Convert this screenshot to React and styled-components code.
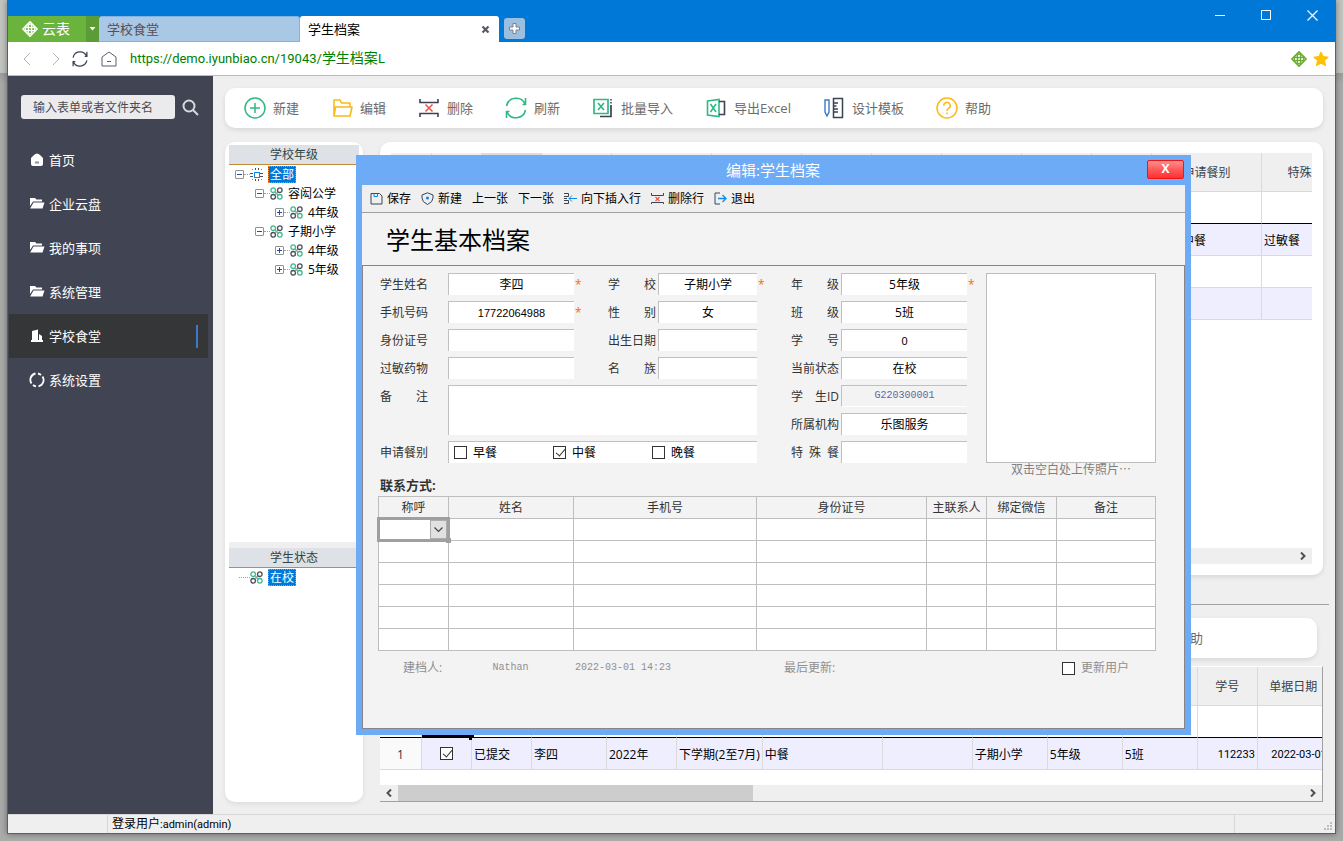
import React, { useState } from 'react';
import styled, { createGlobalStyle } from 'styled-components';

const GlobalStyle = createGlobalStyle`
  * {
    box-sizing: border-box;
  }

  body {
    margin: 0;
    font-family: "Open Sans", "Noto Sans CJK SC", sans-serif;
    font-size: 12px;
    line-height: 16px;
    color: #000;
  }

  button, input, select, textarea {
    margin: 0;
    padding: 0;
    border: 0;
    border-radius: 0;
    background: none;
    font: inherit;
    color: inherit;
  }

  svg {
    display: block;
    flex: none;
  }
`;

/* ---------- window frame ---------- */

const Desktop = styled.div`
  display: flex;
  flex-direction: column;
  min-height: 100vh;
  padding: 0 7px 7px;
  background: linear-gradient(#c2c4c0 73px, #9b9c9b 73px, #a9aba9 84px);
`;

const Window = styled.div`
  position: relative;
  display: flex;
  flex: 1;
  flex-direction: column;
  border: 1px solid #0078d7;
  border-top: 0;
  background: #efefef;
  box-shadow: 0 0 6px rgba(0, 0, 0, 0.4);
`;

const TitleBar = styled.header`
  display: flex;
  align-items: flex-end;
  height: 42px;
  background: #0078d7;
`;

const BrandButton = styled.button`
  display: flex;
  align-items: center;
  gap: 4px;
  width: 78px;
  height: 26px;
  padding-left: 14px;
  background: #6ab43e;
  color: #fff;
  font-size: 14px;
`;

const BrandMore = styled.button`
  display: flex;
  align-items: center;
  justify-content: center;
  width: 13px;
  height: 26px;
  background: #5c9c37;
`;

const Tab = styled.div`
  display: flex;
  align-items: center;
  width: ${(props) => (props.$active ? '199px' : '201px')};
  height: 26px;
  padding: 0 8px;
  border: solid ${(props) => (props.$active ? '#fff' : '#84b2e0')};
  border-width: 1px 1px 1px 0;
  border-radius: 3px 3px 0 0;
  background: ${(props) => (props.$active ? '#fff' : '#a9c8e5')};
  color: ${(props) => (props.$active ? '#000' : '#5d4c50')};

  .name {
    flex: 1;
    text-align: left;
    font-size: 13px;
  }
`;

const AddTab = styled.button`
  display: flex;
  align-items: center;
  justify-content: center;
  width: 21px;
  height: 21px;
  margin: 0 0 3px 5px;
  border-radius: 3px;
  background: #9dbfdf;
`;

const WindowButtons = styled.div`
  display: flex;
  align-self: flex-start;
  margin-left: auto;

  button {
    display: flex;
    align-items: center;
    justify-content: center;
    width: 46px;
    height: 30px;
  }
`;

const AddressBar = styled.nav`
  display: flex;
  align-items: center;
  gap: 13px;
  height: 34px;
  padding: 0 6px 0 12px;
  border-bottom: 1px solid #bcbcbc;
  background: #fff;

  a {
    color: #008000;
    font-family: Roboto, "Noto Sans CJK SC", sans-serif;
    font-size: 13px;
    text-decoration: none;
  }

  a span {
    font-size: 14px;
  }

  .marks {
    display: flex;
    gap: 6px;
    margin-left: auto;
  }
`;

const StatusBar = styled.footer`
  display: flex;
  height: 19px;
  border-top: 1px solid #d7d7d7;
  line-height: 18px;

  .blank {
    width: 100px;
    border-right: 1px solid #d7d7d7;
  }

  .user {
    flex: 1;
    padding-left: 4px;
  }

  .user span {
    font-family: Roboto, sans-serif;
    font-size: 11px;
  }

  .grip {
    display: flex;
    align-items: flex-end;
    justify-content: flex-end;
    width: 101px;
    padding: 3px;
    border-left: 1px solid #d7d7d7;
  }
`;

/* ---------- side menu ---------- */

const Body = styled.div`
  display: flex;
  flex: 1;
`;

const SideBar = styled.aside`
  flex: none;
  width: 205px;
  padding: 19px 0;
  background: #414453;
`;

const SearchRow = styled.form`
  display: flex;
  align-items: center;
  gap: 7px;
  margin-bottom: 19px;
  padding-left: 13px;

  input {
    width: 154px;
    height: 24px;
    padding: 0 12px;
    border-radius: 3px;
    background: #ebebee;
  }

  input::placeholder {
    color: #4c4c50;
  }
`;

const MenuItem = styled.a`
  display: flex;
  align-items: center;
  gap: 4px;
  height: 44px;
  margin: 0 5px 0 1px;
  padding: 0 10px 0 20px;
  background: ${(props) => (props.$active ? '#353638' : 'transparent')};
  color: #fff;
  font-size: 13px;
  text-decoration: none;

  &::after {
    content: "";
    width: 2px;
    height: 23px;
    margin-left: auto;
    background: ${(props) => (props.$active ? '#3f78c8' : 'transparent')};
  }
`;

/* ---------- main area ---------- */

const Content = styled.main`
  display: flex;
  flex: 1;
  flex-direction: column;
  gap: 14px;
  min-width: 0;
  padding: 12px;
`;

const ToolBar = styled.div`
  display: flex;
  align-items: center;
  gap: 32px;
  height: 40px;
  padding: 0 19px;
  border-radius: 10px;
  background: #fff;
  box-shadow: 0 2px 5px rgba(0, 0, 0, 0.1);
`;

const ToolButton = styled.button`
  display: flex;
  align-items: center;
  gap: 7px;
  color: #6b6b6b;
  font-size: 13px;
  white-space: nowrap;
`;

const Columns = styled.div`
  display: flex;
  flex: 1;
  gap: 17px;
`;

const TreePanel = styled.section`
  display: flex;
  flex-direction: column;
  flex: none;
  width: 138px;
  padding: 3px 4px;
  border-radius: 10px;
  background: #fff;
  box-shadow: 0 2px 5px rgba(0, 0, 0, 0.08);

  h2 {
    height: 20px;
    margin: 0;
    border-bottom: 1px solid #c08c3c;
    background: #dee2e6;
    color: #2f4545;
    font-size: 12px;
    font-weight: 400;
    line-height: 20px;
    text-align: center;
  }
`;

const Splitter = styled.div`
  height: 6px;
  background: #efefef;
`;

const Tree = styled.ul`
  flex: ${(props) => (props.$grow ? '1' : 'none')};
  height: ${(props) => (props.$grow ? 'auto' : '231px')};
  margin: 0;
  padding: 0;
  list-style: none;
`;

const TreeRow = styled.li`
  display: flex;
  align-items: center;
  height: 19px;
  padding-left: ${(props) => 6 + props.$level * 20}px;

  .toggle {
    display: flex;
    align-items: center;
    justify-content: center;
    width: 9px;
    height: 9px;
    border: 1px solid #919191;
    border-radius: 1px;
  }

  .dots {
    width: ${(props) => (props.$leaf ? '11px' : '6px')};
    margin-left: ${(props) => (props.$leaf ? '4px' : '0')};
    border-top: 1px dotted #a0a0a0;
  }

  .label {
    margin-left: 5px;
    white-space: nowrap;
  }

  .label.selected {
    padding: 0 1px;
    border: 1px dotted #ff8728;
    background: #0078d7;
    color: #fff;
    line-height: 15px;
  }
`;

const GridColumn = styled.div`
  display: flex;
  flex: 1;
  flex-direction: column;
  min-width: 0;
`;

const GridCard = styled.section`
  display: flex;
  flex: 1;
  flex-direction: column;
  padding: 11px;
  border-radius: 10px;
  background: #fff;
  box-shadow: 0 2px 5px rgba(0, 0, 0, 0.1);
`;

const Divider = styled.hr`
  width: auto;
  height: 1px;
  margin: 29px -6px 13px 0;
  border: 0;
  background: #a0a0a0;
`;

const LowerBar = styled(ToolBar)`
  flex: none;
  justify-content: flex-end;
  margin: 0 6px 8px 0;
  padding-right: 114px;
`;

const LowerGrid = styled.section`
  display: flex;
  flex-direction: column;
  height: 136px;
  border: 1px solid #a0a0a0;
  border-top-color: #fff;
  border-left: 0;
  background: #fff;
`;

const GridView = styled.div`
  flex: 1;
  overflow: hidden;
`;

const DataGrid = styled.table`
  width: max-content;
  table-layout: fixed;
  border-spacing: 0;

  th {
    height: 39px;
    padding: 2px 0 0;
    border-right: 1px solid #dadada;
    border-bottom: 1px solid #dadada;
    background: #efefef;
    color: #39424e;
    font-weight: 400;
  }

  th.sorted {
    background: #dcdcdc;
  }

  td {
    position: relative;
    height: 32px;
    padding: 2px 2px 0;
    border-right: 1px solid #dadada;
    border-bottom: 1px solid #dadada;
    white-space: nowrap;
  }

  tr.filter td {
    border-bottom-color: #000;
  }

  tr.shaded td {
    background: #eeeeff;
  }

  tr td.number {
    background: #fafafa;
    color: #333;
    text-align: center;
  }

  td.check {
    padding-top: 0;
    text-align: center;
  }

  .check input {
    display: block;
    margin: 0 auto;
  }

  .right {
    font-family: Roboto, sans-serif;
    font-size: 11px;
    text-align: right;
  }

  td.meal {
    padding-left: 30px;
  }
`;

const CellCursor = styled.span`
  position: absolute;
  top: -3px;
  left: 0;
  right: 0;
  height: 3px;
  background: #000;

  &::after {
    content: "";
    position: absolute;
    right: -3px;
    width: 5px;
    height: 5px;
    background: #000;
  }
`;

const ScrollBar = styled.div`
  display: flex;
  justify-content: space-between;
  height: 16px;
  background: #efefef;

  button {
    display: flex;
    align-items: center;
    justify-content: center;
    width: 18px;
  }

  .thumb {
    flex: none;
    width: 355px;
    margin-right: auto;
    background: #cdcdcd;
  }
`;

const CheckBox = styled.input.attrs({ type: 'checkbox' })`
  position: relative;
  flex: none;
  width: 13px;
  height: 13px;
  appearance: none;
  border: 1px solid #333;
  background: #fff;

  &:checked::after {
    content: "";
    position: absolute;
    top: 0;
    left: 4px;
    width: 4px;
    height: 8px;
    border: solid #333;
    border-width: 0 1px 1px 0;
    transform: rotate(40deg);
  }
`;

/* ---------- dialog ---------- */

const Dialog = styled.div`
  position: absolute;
  top: 155px;
  left: 348px;
  display: flex;
  flex-direction: column;
  width: 835px;
  min-height: 580px;
  padding: 0 6px 6px;
  background: #6dabf6;
`;

const DialogTitle = styled.div`
  display: flex;
  align-items: center;
  height: 30px;
  padding: 0 1px 0 37px;
  color: #fff;
  font-size: 15px;
  text-align: center;

  span {
    flex: 1;
  }

  button {
    width: 37px;
    height: 19px;
    margin-bottom: 2px;
    border: 1px solid #f01414;
    border-radius: 2px;
    background: linear-gradient(#ff8f8f, #ff5a5a 50%, #ff3030);
    font-size: 12px;
    font-weight: 700;
    line-height: 16px;
  }
`;

const DialogTools = styled.div`
  display: flex;
  align-items: center;
  gap: 10px;
  height: 28px;
  padding-left: 8px;
  border-bottom: 1px solid #a0a0a0;
  background: #efefef;

  button {
    display: flex;
    align-items: center;
    gap: 4px;
  }
`;

const FormTitle = styled.h1`
  height: 52px;
  margin: 0;
  padding-left: 24px;
  background: #f3f3f3;
  font-size: 24px;
  font-weight: 400;
  line-height: 54px;
`;

const FormBody = styled.form`
  flex: 1;
  padding: 7px 28px 0 15px;
  border: 1px solid #868686;
  background: #f3f3f3;
`;

const FieldGrid = styled.div`
  display: grid;
  grid-template-columns: 228px 183px 195px 170px;
  grid-template-rows: repeat(7, 22px);
  row-gap: 6px;
  padding-left: 2px;
`;

const Field = styled.div`
  grid-column: ${(props) => props.$col};
  grid-row: ${(props) => props.$row};
  display: flex;
  color: #333;
  line-height: 22px;

  > label, > .caption {
    flex: none;
    width: ${(props) => (props.$wide ? '68px' : '50px')};
    padding-top: 1px;
    white-space: pre;
  }

  > input {
    width: ${(props) => (props.$short ? '99px' : '126px')};
    border: solid #c0c0c0;
    border-width: 1px 0 0 1px;
    background: #fff;
    color: #000;
    text-align: center;
  }

  > input.digits {
    font-family: "Liberation Sans", "Noto Sans CJK SC", sans-serif;
    font-size: 11px;
  }

  > input:disabled {
    background: #f3f3f3;
    border-bottom: 1px solid #fff;
    color: #666699;
    font-family: "Liberation Mono", monospace;
    font-size: 10px;
  }

  > textarea {
    width: 309px;
    height: 50px;
    border: solid #c0c0c0;
    border-width: 1px 0 0 1px;
    background: #fff;
    resize: none;
  }

  .star {
    padding-left: 1px;
    color: #ff6a00;
    font-size: 12px;
    line-height: 24px;
  }
`;

const MealBox = styled.div`
  display: flex;
  width: 309px;
  padding-left: 5px;
  border: solid #c0c0c0;
  border-width: 1px 0 0 1px;
  background: #fff;

  label {
    display: flex;
    align-items: center;
    gap: 6px;
    width: 99px;
    color: #000;
  }
`;

const PhotoBox = styled.button`
  grid-column: 4;
  grid-row: 1 / 8;
  border: 1px solid #bebebe;
  background: #fff;
`;

const ContactHead = styled.div`
  display: flex;
  justify-content: space-between;
  height: 33px;
  padding-left: 2px;

  h3 {
    margin: 14px 0 0;
    color: #333;
    font-size: 13px;
    font-weight: 700;
  }

  p {
    width: 170px;
    margin: -1px 0 0;
    color: #808080;
    text-align: center;
  }
`;

const ContactTable = styled.table`
  width: 778px;
  table-layout: fixed;
  border-collapse: collapse;
  background: #fff;

  th, td {
    height: 22px;
    padding: 0;
    border: 1px solid #bebebe;
  }

  th {
    background: #f3f3f3;
    color: #333;
    font-weight: 400;
  }

  td:first-child {
    position: relative;
  }
`;

const CellSelect = styled.div`
  position: absolute;
  top: -2px;
  left: -2px;
  right: -2px;
  bottom: -2px;
  border: 3px solid #9e9ea3;

  select {
    width: 100%;
    height: 100%;
    appearance: none;
    background: #fff;
  }

  svg {
    position: absolute;
    top: 0;
    right: 0;
    pointer-events: none;
  }

  &::after {
    content: "";
    position: absolute;
    right: -4px;
    bottom: -4px;
    width: 5px;
    height: 5px;
    background: #9e9ea3;
  }
`;

const FormFoot = styled.div`
  display: grid;
  grid-template-columns: 70px 125px 209px 280px auto;
  align-items: center;
  height: 34px;
  color: #909090;

  .maker {
    padding-left: 25px;
  }

  .mono {
    font-family: "Liberation Mono", monospace;
    font-size: 10px;
  }

  .name {
    text-align: center;
  }

  .updated {
    padding-left: 2px;
  }

  label {
    display: flex;
    align-items: center;
    gap: 6px;
  }
`;

/* ---------- icons ---------- */

const BrandIcon = ({ size = 16, color = '#fff' }) => (
  <svg width={size} height={size} viewBox="0 0 18 18" fill="none" stroke={color}>
    <path d="M9 1 L17 9 L9 17 L1 9 Z" strokeWidth="1.8" strokeLinejoin="round" />
    <circle cx="9" cy="5.5" r="2" strokeWidth="1.5" />
    <circle cx="9" cy="12.5" r="2" strokeWidth="1.5" />
    <circle cx="5.5" cy="9" r="2" strokeWidth="1.5" />
    <circle cx="12.5" cy="9" r="2" strokeWidth="1.5" />
  </svg>
);

const RefreshIcon = ({ size = 22, color = '#2fb985', width = 1.6 }) => (
  <svg width={size} height={size} viewBox="0 0 22 22" fill="none" stroke={color} strokeWidth={width}>
    <path d="M1.500 9 A9.800 9.800 0 0 1 20 7 M20.500 1 V7.500 H17.500" />
    <path d="M20.500 13 A9.800 9.800 0 0 1 2 15 M1.500 21 V14.500 H4.500" />
  </svg>
);

const PlusIcon = () => (
  <svg width="22" height="22" fill="none" stroke="#2fb985" strokeWidth="1.5">
    <circle cx="11" cy="11" r="10" />
    <path d="M11 6 V16 M6 11 H16" />
  </svg>
);

const FolderIcon = () => (
  <svg width="22" height="22" fill="none" stroke="#fbb917" strokeWidth="1.6" strokeLinejoin="round">
    <path d="M3 19 V3 H9 L10.500 6 H19 V10 M3 19 L4.500 10 H21 L19 19 Z" />
  </svg>
);

const DeleteIcon = ({ size = 22, color = '#3b4252' }) => (
  <svg width={size} height={size} viewBox="0 0 22 22" fill="none">
    <path d="M2 2 V5.500 H20 V2 M2 20 V16.500 H20 V20" stroke={color} strokeWidth="1.6" />
    <path d="M7.500 7.500 L14.500 14.500 M14.500 7.500 L7.500 14.500" stroke="#f05545" strokeWidth="1.6" />
  </svg>
);

const SmallDeleteIcon = () => (
  <svg width="13" height="13" fill="none">
    <path d="M0.500 1 V3.500 H12.500 V1 M0.500 12 V10.500 H12.500 V12" stroke="#3b4252" />
    <path d="M4.500 5 L8.500 9 M8.500 5 L4.500 9" stroke="#f05545" strokeWidth="1.2" />
  </svg>
);

const ImportIcon = () => (
  <svg width="22" height="22" fill="none">
    <path d="M2 2.500 H16 V16.500 H2 Z M6 6 L12 13 M12 6 L6 13" stroke="#2fb985" strokeWidth="1.7" />
    <path d="M19 8 V19.500 H8" stroke="#3b4252" strokeWidth="1.7" />
    <path d="M19 2 V7" stroke="#3b4252" strokeWidth="1.5" strokeDasharray="1.500 1.500" />
  </svg>
);

const ExportIcon = () => (
  <svg width="22" height="22" fill="none">
    <path d="M2.500 4 L14 2.500 V19.500 L2.500 18 Z M5.500 7 L11 15 M11 7 L5.500 15" stroke="#2fb985" strokeWidth="1.6" />
    <path d="M14 4.500 H19.500 V17.500 H14" stroke="#3b4252" strokeWidth="1.6" />
  </svg>
);

const DesignIcon = () => (
  <svg width="22" height="22" fill="none">
    <path d="M2 3 H6 V15 L4 19 L2 15 Z" stroke="#3f78c8" strokeWidth="1.4" />
    <path d="M10.500 1.500 H19.500 V20.500 H10.500 Z M11 6 H15 M11 9 H13.500 M11 12 H15 M11 15 H15" stroke="#3b4252" strokeWidth="1.5" />
  </svg>
);

const HelpIcon = () => (
  <svg width="22" height="22" fill="none" stroke="#fbb917" strokeWidth="1.5">
    <circle cx="11" cy="11" r="10" />
    <path d="M7.800 8.800 A3.200 3.200 0 1 1 12.500 11.400 Q11 12.200 11 14 M11 15.500 V17.200" />
  </svg>
);

const DoveIcon = () => (
  <svg width="13" height="13" fill="none" strokeWidth="1.3">
    <path d="M5 5 L8 8 M8 5 L5 8" stroke="#9aa5a8" />
    <circle cx="3.200" cy="3.200" r="2.300" stroke="#3dba8b" />
    <circle cx="9.800" cy="3.200" r="2.300" stroke="#4b505c" />
    <circle cx="3.200" cy="9.800" r="2.300" stroke="#4b505c" />
    <circle cx="9.800" cy="9.800" r="2.300" stroke="#3dba8b" />
  </svg>
);

const RootIcon = () => (
  <svg width="13" height="13" fill="none" shapeRendering="crispEdges">
    <rect x="4" y="4" width="5" height="5" stroke="#0c8ce9" strokeWidth="1" />
    <path d="M2 1.500 H12 M2 11.500 H12" stroke="#7c828c" strokeWidth="1" strokeDasharray="1 2" />
    <path d="M5 1 H6 M8 1 H9 M5 12 H6 M8 12 H9" stroke="#4b505c" strokeWidth="2" />
    <path d="M0 5.500 H3 M0 8.500 H3 M10 5.500 H13 M10 8.500 H13" stroke="#4b505c" />
  </svg>
);

const menuIcons = {
  home: (
    <svg width="16" height="16">
      <path d="M2 6 L5 3 Q8 0 11 3 L14 6 V12 Q14 14 12 14 H4 Q2 14 2 12 Z" fill="#fff" />
      <path d="M6 10.500 H10" stroke="#8d8f99" strokeWidth="2" />
    </svg>
  ),
  folder: (
    <svg width="16" height="16">
      <path d="M1 2 H6 L7.500 3.500 H13 V5.500 H4 L1 10 Z" fill="#fff" />
      <path d="M4.500 6.500 H15.500 L13.500 12.500 H1.200 Z" fill="#fff" />
    </svg>
  ),
  building: (
    <svg width="16" height="16">
      <path d="M3 13 V3 L9 1.500 V13 Z M10 13 V6 L13 8 V13 Z M2 12 H14 V14 H2 Z" fill="#fff" />
    </svg>
  ),
  ring: (
    <svg width="16" height="16" fill="none" stroke="#fff" strokeWidth="1.8">
      <path d="M6.500 1.500 A6.500 6.500 0 0 0 2.500 11.500 M4 13 A6.500 6.500 0 0 0 7 14.400 M9.500 14.400 A6.500 6.500 0 0 0 13.500 4.500 M12 3 A6.500 6.500 0 0 0 9 1.500" />
    </svg>
  ),
};

const Arrow = ({ flip }) => (
  <svg width="8" height="8" fill="none" stroke="#505050" strokeWidth="2">
    <path d={flip ? 'M6 0.500 L2.500 4 L6 7.500' : 'M2 0.500 L5.500 4 L2 7.500'} />
  </svg>
);

/* ---------- data ---------- */

const menu = [
  { icon: 'home', name: '首页' },
  { icon: 'folder', name: '企业云盘' },
  { icon: 'folder', name: '我的事项' },
  { icon: 'folder', name: '系统管理' },
  { icon: 'building', name: '学校食堂', active: true },
  { icon: 'ring', name: '系统设置' },
];

const tools = [
  { icon: <PlusIcon />, name: '新建' },
  { icon: <FolderIcon />, name: '编辑' },
  { icon: <DeleteIcon />, name: '删除' },
  { icon: <RefreshIcon />, name: '刷新' },
  { icon: <ImportIcon />, name: '批量导入' },
  { icon: <ExportIcon />, name: '导出Excel' },
  { icon: <DesignIcon />, name: '设计模板' },
  { icon: <HelpIcon />, name: '帮助' },
];

const grades = [
  { level: 0, name: '全部', sign: '-', selected: true },
  { level: 1, name: '容闳公学', sign: '-' },
  { level: 2, name: '4年级', sign: '+' },
  { level: 1, name: '子期小学', sign: '-' },
  { level: 2, name: '4年级', sign: '+' },
  { level: 2, name: '5年级', sign: '+' },
];

const dialogTools = [
  {
    name: '保存',
    icon: (
      <svg width="13" height="13" fill="none">
        <path d="M1 1.500 H9.500 L12 4 V12 H1 Z" stroke="#3b4252" />
        <path d="M4 1.500 V4.500 H7.500 V1.500" stroke="#0c8ce9" />
      </svg>
    ),
  },
  {
    name: '新建',
    icon: (
      <svg width="13" height="13" fill="none">
        <path d="M6.500 0.800 L12 3 V6 Q12 10 6.500 12.500 Q1 10 1 6 V3 Z" stroke="#3b4252" />
        <circle cx="6.500" cy="6" r="1.600" fill="#0c8ce9" />
      </svg>
    ),
  },
  { name: '上一张' },
  { name: '下一张' },
  {
    name: '向下插入行',
    icon: (
      <svg width="13" height="13" fill="none">
        <path d="M0 1.500 H4.500 V4.500 H0 M0 6.500 H3 M0 8.500 H4.500 V11.500 H0" stroke="#3b4252" />
        <path d="M5 6.500 H13 M8 3.500 L5 6.500 L8 9.500" stroke="#0c8ce9" />
      </svg>
    ),
  },
  { name: '删除行', icon: <SmallDeleteIcon /> },
  {
    name: '退出',
    icon: (
      <svg width="13" height="13" fill="none">
        <path d="M6 1 H1 V12 H6" stroke="#3b4252" />
        <path d="M4 6.500 H12 M8.500 3 L12 6.500 L8.500 10" stroke="#0c8ce9" strokeWidth="1.300" />
      </svg>
    ),
  },
];

const fields = [
  { id: 'name', label: '学生姓名', value: '李四', col: 1, row: 1, wide: true, star: true },
  { id: 'phone', label: '手机号码', value: '17722064988', col: 1, row: 2, wide: true, star: true, digits: true },
  { id: 'idcard', label: '身份证号', value: '', col: 1, row: 3, wide: true },
  { id: 'allergy', label: '过敏药物', value: '', col: 1, row: 4, wide: true },
  { id: 'school', label: '学　　校', value: '子期小学', col: 2, row: 1, short: true, star: true },
  { id: 'sex', label: '性　　别', value: '女', col: 2, row: 2, short: true },
  { id: 'birth', label: '出生日期', value: '', col: 2, row: 3, short: true },
  { id: 'nation', label: '名　　族', value: '', col: 2, row: 4, short: true },
  { id: 'grade', label: '年　　级', value: '5年级', col: 3, row: 1, star: true },
  { id: 'class', label: '班　　级', value: '5班', col: 3, row: 2 },
  { id: 'number', label: '学　　号', value: '0', col: 3, row: 3, digits: true },
  { id: 'state', label: '当前状态', value: '在校', col: 3, row: 4 },
  { id: 'sid', label: '学　生ID', value: 'G220300001', col: 3, row: 5, disabled: true },
  { id: 'org', label: '所属机构', value: '乐图服务', col: 3, row: 6 },
  { id: 'special', label: '特\u2002殊\u2002餐', value: '', col: 3, row: 7 },
];

const contactCols = [
  ['称呼', 70],
  ['姓名', 125],
  ['手机号', 183],
  ['身份证号', 170],
  ['主联系人', 60],
  ['绑定微信', 70],
  ['备注', 99],
];

const upperCols = [41, 50, 60, 70, 100, 90, 70, 70, 80, 70, 60, 110, 88];
const lowerCols = [42, 50, 60, 75, 70, 85, 120, 90, 75, 75, 75, 60, 72];
const lowerRow = ['已提交', '李四', '2022年', '下学期(2至7月)', '中餐', '', '子期小学', '5年级', '5班'];

/* ---------- components ---------- */

const TreeNode = ({ level = 0, name, sign, selected, root }) => (
  <TreeRow $level={level} $leaf={!sign}>
    {sign && (
      <span className="toggle">
        <svg width="7" height="7" stroke="#2b4ba0">
          <path d={sign === '+' ? 'M1 3.500 H6 M3.500 1 V6' : 'M1 3.500 H6'} />
        </svg>
      </span>
    )}
    <span className="dots" />
    {root ? <RootIcon /> : <DoveIcon />}
    <span className={selected ? 'label selected' : 'label'}>{name}</span>
  </TreeRow>
);

const GridScroll = () => (
  <ScrollBar>
    <button type="button" aria-label="scroll left"><Arrow flip /></button>
    <span className="thumb" />
    <button type="button" aria-label="scroll right"><Arrow /></button>
  </ScrollBar>
);

const UpperTable = () => (
  <GridCard>
    <GridView>
      <DataGrid>
        <colgroup>{upperCols.map((width, i) => <col key={i} width={width} />)}</colgroup>
        <thead>
          <tr>
            {upperCols.map((width, i) => (
              <th key={i} className={i === 2 ? 'sorted' : ''}>{{ 11: '申请餐别', 12: '特殊餐' }[i]}</th>
            ))}
          </tr>
        </thead>
        <tbody>
          {['filter', 'shaded', '', 'shaded'].map((kind, row) => (
            <tr key={row} className={kind}>
              {upperCols.map((width, i) => (
                <td key={i} className={i === 11 ? 'meal' : ''}>{row === 1 && { 11: '中餐', 12: '过敏餐' }[i]}</td>
              ))}
            </tr>
          ))}
        </tbody>
      </DataGrid>
    </GridView>
    <GridScroll />
  </GridCard>
);

const LowerTable = () => (
  <LowerGrid>
    <GridView>
      <DataGrid>
        <colgroup>{lowerCols.map((width, i) => <col key={i} width={width} />)}</colgroup>
        <thead>
          <tr>
            {lowerCols.map((width, i) => <th key={i}>{{ 11: '学号', 12: '单据日期' }[i]}</th>)}
          </tr>
        </thead>
        <tbody>
          <tr className="filter">{lowerCols.map((width, i) => <td key={i} />)}</tr>
          <tr className="shaded">
            <td className="number">1</td>
            <td className="check">
              <CellCursor />
              <CheckBox defaultChecked aria-label="row 1" />
            </td>
            {lowerRow.map((text, i) => <td key={i}>{text}</td>)}
            <td className="right">112233</td>
            <td className="right">2022-03-01</td>
          </tr>
        </tbody>
      </DataGrid>
    </GridView>
    <GridScroll />
  </LowerGrid>
);

const StudentDialog = ({ onClose }) => (
  <Dialog role="dialog" aria-label="编辑:学生档案">
    <DialogTitle>
      <span>编辑:学生档案</span>
      <button type="button" onClick={onClose}>X</button>
    </DialogTitle>
    <DialogTools>
      {dialogTools.map(({ name, icon }) => (
        <button type="button" key={name}>{icon}{name}</button>
      ))}
    </DialogTools>
    <FormTitle>学生基本档案</FormTitle>
    <FormBody>
      <FieldGrid>
        {fields.map((f) => (
          <Field key={f.id} $col={f.col} $row={f.row} $wide={f.wide} $short={f.short}>
            <label htmlFor={f.id}>{f.label}</label>
            <input id={f.id} className={f.digits ? 'digits' : ''} defaultValue={f.value} disabled={f.disabled} />
            {f.star && <span className="star">*</span>}
          </Field>
        ))}
        <Field $col="1 / 3" $row="5 / 7" $wide>
          <label htmlFor="remark">备　　注</label>
          <textarea id="remark" />
        </Field>
        <Field $col="1 / 3" $row={7} $wide>
          <span className="caption">申请餐别</span>
          <MealBox>
            <label><CheckBox />早餐</label>
            <label><CheckBox defaultChecked />中餐</label>
            <label><CheckBox />晚餐</label>
          </MealBox>
        </Field>
        <PhotoBox type="button" aria-label="上传照片" />
      </FieldGrid>
      <ContactHead>
        <h3>联系方式:</h3>
        <p>双击空白处上传照片⋯</p>
      </ContactHead>
      <ContactTable>
        <colgroup>{contactCols.map(([name, width]) => <col key={name} width={width} />)}</colgroup>
        <thead>
          <tr>{contactCols.map(([name]) => <th key={name}>{name}</th>)}</tr>
        </thead>
        <tbody>
          {[0, 1, 2, 3, 4, 5].map((row) => (
            <tr key={row}>
              {contactCols.map(([name], i) => (
                <td key={name}>
                  {row === 0 && i === 0 && (
                    <CellSelect>
                      <select aria-label="称呼" />
                      <svg width="17" height="19" fill="none">
                        <rect x="0.500" y="0.500" width="16" height="18" fill="#e1e1e1" stroke="#adadad" />
                        <path d="M4.500 7.500 L8.500 11.500 L12.500 7.500" stroke="#444" strokeWidth="1.200" />
                      </svg>
                    </CellSelect>
                  )}
                </td>
              ))}
            </tr>
          ))}
        </tbody>
      </ContactTable>
      <FormFoot>
        <span className="maker">建档人:</span>
        <span className="mono name">Nathan</span>
        <span className="mono updated">2022-03-01 14:23</span>
        <span className="updated">最后更新:</span>
        <label><CheckBox />更新用户</label>
      </FormFoot>
    </FormBody>
  </Dialog>
);

const App = () => {

  const [showDialog, setShowDialog] = useState(true);

  return (
    <Desktop>
      <GlobalStyle />
      <Window>
        <TitleBar>
          <BrandButton type="button"><BrandIcon />云表</BrandButton>
          <BrandMore type="button" aria-label="more">
            <svg width="7" height="4"><path d="M0.500 0 H6.500 L3.500 3.500 Z" fill="#fff" /></svg>
          </BrandMore>
          <Tab>
            <button type="button" className="name">学校食堂</button>
          </Tab>
          <Tab $active>
            <button type="button" className="name">学生档案</button>
            <button type="button" aria-label="close tab">
              <svg width="9" height="9" stroke="#555b66" strokeWidth="2.2"><path d="M1.500 1.500 L7.500 7.500 M7.500 1.500 L1.500 7.500" /></svg>
            </button>
          </Tab>
          <AddTab type="button" aria-label="new tab">
            <svg width="11" height="11" fill="#fff" stroke="#7b828c">
              <path d="M4 0.500 H7 V4 H10.500 V7 H7 V10.500 H4 V7 H0.500 V4 H4 Z" />
            </svg>
          </AddTab>
          <WindowButtons>
            <button type="button" aria-label="minimize">
              <svg width="11" height="11" stroke="#fff"><path d="M0 5.500 H10" /></svg>
            </button>
            <button type="button" aria-label="maximize">
              <svg width="11" height="11" fill="none" stroke="#fff"><path d="M0.500 0.500 H9.500 V9.500 H0.500 Z" /></svg>
            </button>
            <button type="button" aria-label="close">
              <svg width="11" height="11" stroke="#fff" strokeWidth="1.2"><path d="M0.500 0.500 L10.500 10.500 M10.500 0.500 L0.500 10.500" /></svg>
            </button>
          </WindowButtons>
        </TitleBar>

        <AddressBar>
          <button type="button" aria-label="back">
            <svg width="16" height="14" fill="none" stroke="#b4b4b4"><path d="M10 1 L4 7 L10 13" /></svg>
          </button>
          <button type="button" aria-label="forward">
            <svg width="10" height="14" fill="none" stroke="#b4b4b4"><path d="M4 1 L10 7 L4 13" /></svg>
          </button>
          <button type="button" aria-label="refresh"><RefreshIcon size={16} color="#3b4252" width={1.7} /></button>
          <button type="button" aria-label="home">
            <svg width="16" height="16" fill="none" stroke="#59606c">
              <path d="M1 15 V6 L8 1 L15 6 V15 Z M6 10.500 H10" />
            </svg>
          </button>
          <a href="#student">https://demo.iyunbiao.cn/19043/<span>学生档案</span>L</a>
          <div className="marks">
            <BrandIcon color="#68ab2c" />
            <svg width="16" height="16" fill="#ffc000" stroke="#ffc000" strokeLinejoin="round">
              <path d="M8 1 L10.200 5.600 L15.300 6.200 L11.500 9.600 L12.600 14.700 L8 12.200 L3.400 14.700 L4.500 9.600 L0.700 6.200 L5.800 5.600 Z" />
            </svg>
          </div>
        </AddressBar>

        <Body>
          <SideBar>
            <SearchRow>
              <input type="text" placeholder="输入表单或者文件夹名" aria-label="输入表单或者文件夹名" />
              <button type="button" aria-label="search">
                <svg width="17" height="17" fill="none" stroke="#d8d8dc" strokeWidth="2">
                  <circle cx="7" cy="7" r="5.500" />
                  <path d="M11 11 L16 16" />
                </svg>
              </button>
            </SearchRow>
            {menu.map(({ icon, name, active }) => (
              <MenuItem href="#menu" key={name} $active={active}>{menuIcons[icon]}{name}</MenuItem>
            ))}
          </SideBar>

          <Content>
            <ToolBar>
              {tools.map(({ icon, name }) => (
                <ToolButton type="button" key={name}>{icon}{name}</ToolButton>
              ))}
            </ToolBar>
            <Columns>
              <TreePanel>
                <h2>学校年级</h2>
                <Tree $grow>
                  {grades.map((node, i) => <TreeNode key={i} root={i === 0} {...node} />)}
                </Tree>
                <Splitter />
                <h2>学生状态</h2>
                <Tree>
                  <TreeNode name="在校" selected />
                </Tree>
              </TreePanel>
              <GridColumn>
                <UpperTable />
                <Divider />
                <LowerBar>
                  {tools.map(({ icon, name }) => (
                    <ToolButton type="button" key={name}>{icon}{name}</ToolButton>
                  ))}
                </LowerBar>
                <LowerTable />
              </GridColumn>
            </Columns>
          </Content>
        </Body>

        <StatusBar>
          <span className="blank" />
          <span className="user">登录用户<span>:admin(admin)</span></span>
          <span className="grip">
            <svg width="8" height="8" fill="#bdbdbd">
              <path d="M6 0 H8 V2 H6 Z M3 3 H5 V5 H3 Z M6 3 H8 V5 H6 Z M0 6 H2 V8 H0 Z M3 6 H5 V8 H3 Z M6 6 H8 V8 H6 Z" />
            </svg>
          </span>
        </StatusBar>

        {showDialog && <StudentDialog onClose={() => setShowDialog(false)} />}
      </Window>
    </Desktop>
  );
};

export default App;
